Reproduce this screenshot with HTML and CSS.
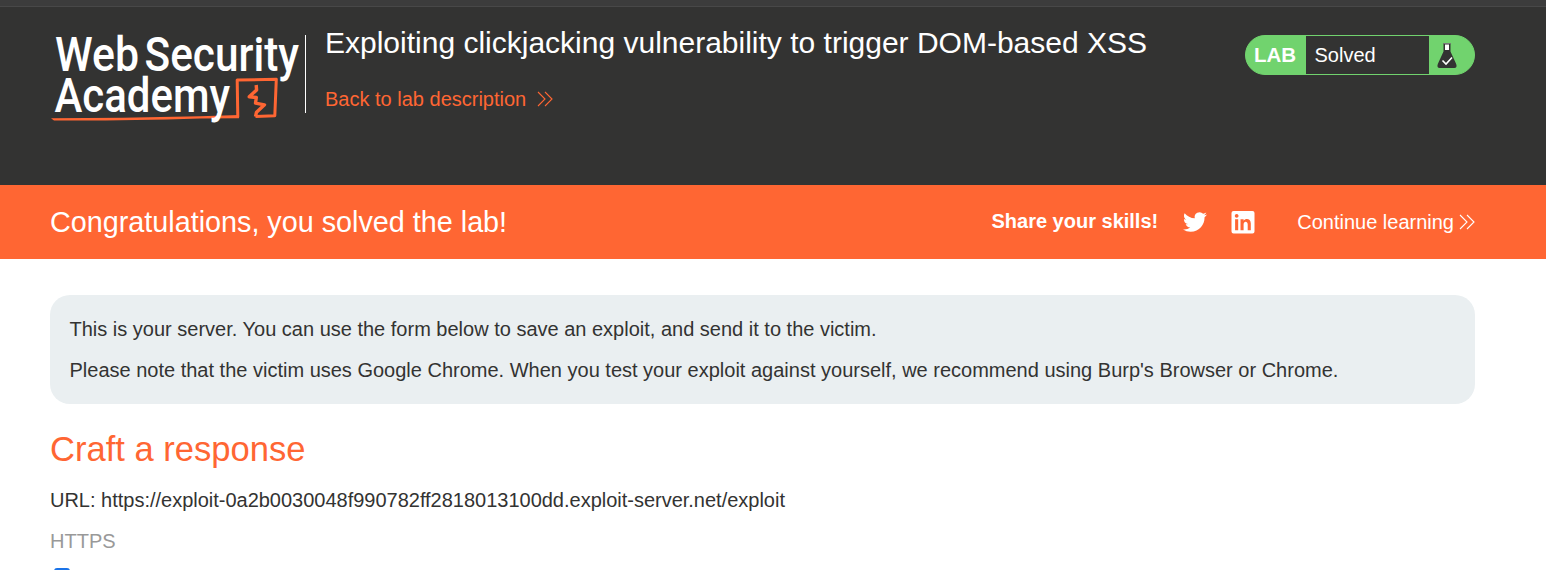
FILE: index.html
```html
<!DOCTYPE html>
<html lang="en">
<head>
<meta charset="utf-8">
<title>Exploit Server</title>
<link rel="stylesheet" href="styles.css">
</head>
<body>
<div class="topbar"></div>
<header class="header">
  <svg class="logo" width="250" height="92" viewBox="50 33 250 92" role="img" aria-label="Web Security Academy">
    <g fill="none" stroke="#ff6633" stroke-linejoin="round">
      <path d="M237.800 117.200L237.200 80L276.300 79.300L274.800 115.800L255.500 116.600" stroke-width="3"/>
      <path d="M255.500 116.600L256.500 112.200L264.500 104.800L255.500 103.200L256.300 97.500L249.200 96.800L256.600 90L256.200 85" stroke-width="3.400"/>
    </g>
    <path d="M51 118.200Q120 118 200 116.200L239 115V118.300L200 118.500Q120 121 54 120.500Z" fill="#ff6633"/>
    <g class="logo-text">
      <text x="55" y="71" textLength="84" lengthAdjust="spacingAndGlyphs">Web</text>
      <text x="144.500" y="71" textLength="154.500" lengthAdjust="spacingAndGlyphs">Security</text>
      <text x="54.500" y="112" textLength="175.500" lengthAdjust="spacingAndGlyphs">Academy</text>
    </g>
  </svg>
  <div class="intro">
    <h2 class="title">Exploiting clickjacking vulnerability to trigger DOM-based XSS</h2>
    <a class="back">Back to lab description
      <svg class="chevrons" width="16" height="16" viewBox="0 0 16 16"><path d="M1 1l7 7-7 7M8 1l7 7-7 7"/></svg>
    </a>
  </div>
  <div class="status">
    <span class="status-lab">LAB</span>
    <span class="status-text">Solved</span>
    <svg class="flask" width="45" height="38" viewBox="0 0 45 38">
      <path d="M14.500 8h7v7.500l5.700 12.500q1.300 4-2 4H10.800q-3.300 0-2-4l5.700-12.500z" fill="#333332"/>
      <path d="M16 8.500h4v5.500h-4z" fill="#fff"/><path d="M14 7.500h8" stroke="#777"/>
      <path d="M13.500 24.500l3.500 3.500 6-6.500" fill="none" stroke="#fff" stroke-width="1.600"/>
    </svg>
  </div>
</header>
<section class="banner">
  <h3 class="congrats">Congratulations, you solved the lab!</h3>
  <span class="share">Share your skills!</span>
  <svg class="twitter" width="24" height="24" viewBox="0 0 24 24"><path fill="#fff" d="M23.950 4.570a10 10 0 0 1-2.820.780 4.960 4.960 0 0 0 2.160-2.730c-.950.560-2 .960-3.130 1.190a4.920 4.920 0 0 0-8.380 4.480C7.690 8.090 4.070 6.130 1.640 3.160a4.820 4.820 0 0 0-.660 2.480c0 1.710.870 3.210 2.190 4.100a4.900 4.900 0 0 1-2.230-.620v.060a4.920 4.920 0 0 0 3.950 4.830 5 5 0 0 1-2.210.080 4.940 4.940 0 0 0 4.600 3.420A9.870 9.870 0 0 1 0 19.540a14 14 0 0 0 7.550 2.210c9.050 0 14-7.500 14-13.980l-.020-.640A9.940 9.940 0 0 0 23.950 4.570z"/></svg>
  <svg class="linkedin" width="24" height="24" viewBox="0 0 24 24"><path fill="#fff" fill-rule="evenodd" d="M2.500 1h19A2 2 0 0 1 23.500 3v18.500a2 2 0 0 1-2 2h-19a2 2 0 0 1-2-2V3A2 2 0 0 1 2.500 1zM4.100 9.200V20.200H7.200V9.200zM9.500 9.200V20.200H12.600V14.500C12.600 10.700 16.700 10.700 16.700 14.500V20.200H19.800V13.500C19.800 8.300 14.500 7.900 12.600 10.700V9.200zM5.650 4a1.900 1.900 0 1 0 .01 0z"/></svg>
  <a class="continue">Continue learning
    <svg class="chevrons" width="16" height="16" viewBox="0 0 16 16"><path d="M1 1l7 7-7 7M8 1l7 7-7 7"/></svg>
  </a>
</section>
<main class="content">
  <div class="notice">
    <p>This is your server. You can use the form below to save an exploit, and send it to the victim.</p>
    <p>Please note that the victim uses Google Chrome. When you test your exploit against yourself, we recommend using Burp's Browser or Chrome.</p>
  </div>
  <h1 class="heading">Craft a response</h1>
  <p class="url">URL: <span>https://exploit-0a2b0030048f990782ff2818013100dd.exploit-server.net/exploit</span></p>
  <label class="https">HTTPS</label>
  <span class="checkbox"></span>
</main>
</body>
</html>
```
FILE: styles.css
```css
* { box-sizing: border-box; }
body { margin: 0; height: 570px; overflow: hidden; background: #fff; color: #333332; font: 20px/24px "Liberation Sans", Arial, sans-serif; }
h1, h2, h3, p { margin: 0; font-weight: 400; }
.topbar { height: 7px; background: #3c3c3c; border-bottom: 1px solid #484848; }
.header { display: flex; align-items: flex-start; height: 178px; padding: 26px 71px 0 50px; background: #333332; }
.logo { flex: none; overflow: visible; }
.logo-text { fill: #fff; font: 500 48px Roboto, sans-serif; }
.intro { margin: 2px 0 0 5px; height: 78px; padding-left: 19px; border-left: 1px solid #fff; }
.title { margin-top: -9px; color: #fff; font-size: 30px; line-height: 34px; white-space: nowrap; }
.back { display: flex; align-items: center; gap: 11px; margin-top: 27px; color: #ff6633; }
.chevrons { fill: none; stroke: currentColor; stroke-width: 1.100; }
.status { display: flex; width: 230px; height: 40px; margin: 2px 0 0 auto; overflow: hidden; border: 1px solid #71d36e; border-radius: 20px; background: #71d36e; color: #fff; line-height: 38px; }
.status-lab { width: 60px; padding-left: 8px; font-weight: 700; font-size: 20.500px; }
.status-text { width: 123px; flex: none; padding-left: 8.500px; background: #333332; }
.flask { flex: none; }
.banner { display: flex; align-items: center; height: 74px; padding: 0 71px 0 50px; background: #ff6633; color: #fff; }
.congrats { font-size: 28.750px; line-height: 32px; }
.share { margin: 0 0 2px auto; font-weight: 700; }
.twitter { margin-left: 25px; }
.linkedin { margin-left: 24px; }
.continue { display: flex; align-items: center; gap: 5px; margin-left: 42px; }
.content { padding: 36px 71px 0 50px; }
.notice { display: grid; gap: 17px; height: 109px; padding: 22px 19.500px; border-radius: 20px; background: #eaeff1; }
.heading { margin-top: 25px; color: #ff6633; font-size: 34.550px; line-height: 40px; }
.url { margin-top: 19px; letter-spacing: -0.010px; }
.https { display: block; margin-top: 17px; color: #999; }
.checkbox { display: block; width: 16px; height: 16px; margin: 15px 0 0 4px; border-radius: 3px; background: #1a73e8; }
```
